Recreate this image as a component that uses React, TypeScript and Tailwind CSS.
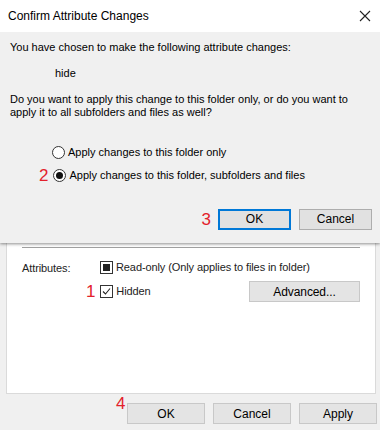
import React from "react";

function Radio({ checked }: { checked?: boolean }) {
  return (
    <span className="flex h-[13px] w-[13px] shrink-0 items-center justify-center rounded-full border border-[#333] bg-white">
      {checked ? <span className="h-[7px] w-[7px] rounded-full bg-[#111]" /> : null}
    </span>
  );
}

function Btn({ children, primary, className = "" }: { children: React.ReactNode; primary?: boolean; className?: string }) {
  return (
    <div
      className={`flex shrink-0 items-center justify-center bg-[#e1e1e1] text-black ${
        primary ? "border-2 border-[#0078d7]" : "border border-[#adadad]"
      } ${className}`}
    >
      {children}
    </div>
  );
}

function Mark({ children, className = "" }: { children: React.ReactNode; className?: string }) {
  return <span className={`text-[17px] leading-none text-[#e3212b] font-['Liberation_Sans',sans-serif] ${className}`}>{children}</span>;
}

export default function App() {
  return (
    <div className="relative h-[430px] w-[380px] overflow-hidden bg-[#f0f0f0] font-['Liberation_Sans',sans-serif] text-black">
      {/* confirm dialog */}
      <div className="relative z-10 h-[243px] bg-[#f0f0f0] shadow-[0_1px_3px_rgba(0,0,0,0.45)]">
        <div className="flex h-[32px] items-center justify-between bg-white pl-[8px] pr-[5px]">
          <span className="text-[12px]">Confirm Attribute Changes</span>
          <svg width="12" height="12" viewBox="0 0 12 12" className="mr-[4px]">
            <path d="M1 1 L11 11 M11 1 L1 11" stroke="#222" strokeWidth="1.1" />
          </svg>
        </div>
        <div className="px-[10px] pt-[8px] text-[11px] leading-[15px]">
          <p>You have chosen to make the following attribute changes:</p>
          <p className="mt-[11px] pl-[45px]">hide</p>
          <p className="mt-[12px] leading-[13px]">
            Do you want to apply this change to this folder only, or do you want to
            <br />
            apply it to all subfolders and files as well?
          </p>
          <div className="mt-[25px] flex flex-col gap-[7px] pl-[42px]">
            <div className="flex h-[16px] items-center gap-[3px]">
              <Radio />
              <span>Apply changes to this folder only</span>
            </div>
            <div className="flex h-[16px] items-center gap-[3px]">
              <Mark className="-ml-[13px] mr-[2px]">2</Mark>
              <Radio checked />
              <span>Apply changes to this folder, subfolders and files</span>
            </div>
          </div>
          <div className="-mr-[2px] mt-[26px] flex items-center justify-end gap-[7px] text-[12px]">
            <Mark>3</Mark>
            <Btn primary className="h-[21px] w-[73px]">OK</Btn>
            <Btn className="ml-[1px] h-[21px] w-[73px]">Cancel</Btn>
          </div>
        </div>
      </div>

      {/* properties window underneath */}
      <div className="flex h-[151px] pl-[6px] pr-[4px]">
        <div className="flex-1 border border-t-0 border-[#dadada] bg-white text-[11px] tracking-[-0.1px] text-[#222]">
          <div className="ml-[15px] mt-[4px] h-px w-[338px] bg-[#a0a0a0]" />
          <div className="mt-[13px] flex pl-[15px]">
            <span className="w-[78px] leading-[14px]">Attributes:</span>
            <div className="flex h-[13px] items-center gap-[3px]">
              <span className="flex h-[13px] w-[13px] items-center justify-center border border-[#333]">
                <span className="h-[7px] w-[7px] bg-[#222]" />
              </span>
              <span>Read-only (Only applies to files in folder)</span>
            </div>
          </div>
          <div className="mt-[6px] flex items-center pl-[79px] pr-[15px]">
            <Mark className="mr-[5px]">1</Mark>
            <span className="flex h-[13px] w-[13px] items-center justify-center border border-[#333]">
              <svg width="9" height="9" viewBox="0 0 9 9">
                <path d="M1 4.5 L3.5 7 L8 1.5" fill="none" stroke="#222" strokeWidth="1.1" />
              </svg>
            </span>
            <span className="ml-[3px]">Hidden</span>
            <Btn className="ml-auto h-[21px] w-[111px] border-[#c8c8c8] bg-[#e4e4e4] text-[12px] text-[#222]">Advanced...</Btn>
          </div>
        </div>
      </div>
      <div className="flex justify-end gap-[8px] pr-[3px] pt-[9px] text-[12px] text-[#222]">
        <div className="relative">
          <Mark className="absolute -left-[11px] -top-[8px]">4</Mark>
          <Btn className="h-[21px] w-[78px] border-[#c8c8c8] bg-[#e4e4e4] text-[#222]">OK</Btn>
        </div>
        <Btn className="h-[21px] w-[78px] border-[#c8c8c8] bg-[#e4e4e4] text-[#222]">Cancel</Btn>
        <Btn className="h-[21px] w-[78px] border-[#c8c8c8] bg-[#e4e4e4] text-[#222]">Apply</Btn>
      </div>
    </div>
  );
}
